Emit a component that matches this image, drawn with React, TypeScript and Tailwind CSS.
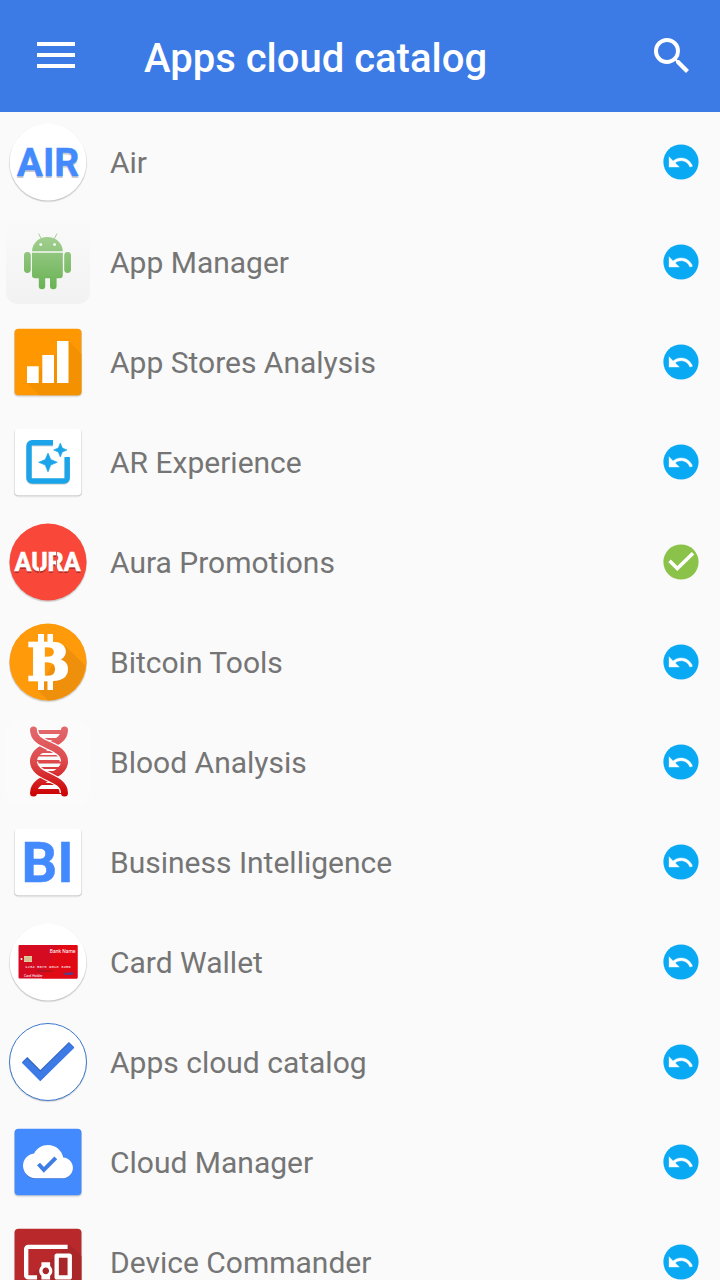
import React from 'react';
import { MdSearch } from 'react-icons/md';

type Item = {
  name: string;
  icon: React.ReactNode;
  installed?: boolean;
};

type Props = {
  children?: React.ReactNode;
};

const UNDO =
  'M12.5 8c-2.65 0-5.05.99-6.9 2.6L2 7v9h9l-3.62-3.62c1.39-1.16 3.16-1.88 5.12-1.88 3.54 0 6.55 2.31 7.6 5.5l2.37-.78C21.08 11.03 17.15 8 12.5 8z';
const CLOUD =
  'M19.35 10.04C18.67 6.59 15.64 4 12 4 9.11 4 6.6 5.64 5.35 8.04 2.34 8.36 0 10.91 0 14c0 3.31 2.69 6 6 6h13c2.76 0 5-2.24 5-5 0-2.64-2.05-4.78-4.65-4.96z';
const DEVICES =
  'M3 6h18V4H3c-1.1 0-2 .9-2 2v12c0 1.1.9 2 2 2h4v-2H3V6zm10 6H9v1.78c-.61.55-1 1.33-1 2.22s.39 1.67 1 2.22V20h4v-1.78c.61-.55 1-1.34 1-2.22s-.39-1.67-1-2.22V12zm-2 5.5c-.83 0-1.5-.67-1.5-1.5s.67-1.5 1.5-1.5 1.5.67 1.5 1.5-.67 1.5-1.5 1.5zM22 8h-6c-.5 0-1 .5-1 1v10c0 .5.5 1 1 1h6c.5 0 1-.5 1-1V9c0-.5-.5-1-1-1zm-1 10h-4v-8h4v8z';

function AppIcon({ children }: Props) {
  return (
    <svg viewBox="0 0 96 96" className="size-24 shrink-0" aria-hidden="true">
      {children}
    </svg>
  );
}

function Round({ fill, stroke, children }: Props & { fill: string; stroke?: string }) {
  return (
    <AppIcon>
      <circle cx="48" cy="49.2" r="39.3" fill="#000" opacity="0.07" />
      <circle cx="48" cy="48.8" r="38.8" fill="#000" opacity="0.12" />
      <circle cx="48" cy="48" r="38.5" fill={fill} stroke={stroke} />
      {children}
    </AppIcon>
  );
}

function Square({ fill, children }: Props & { fill: string }) {
  return (
    <AppIcon>
      <rect x="13.8" y="15" width="68.4" height="68.4" rx="4.5" fill="#000" opacity="0.06" />
      <rect x="14.2" y="15.3" width="67.6" height="67" rx="4" fill="#000" opacity="0.12" />
      <rect x="14.6" y="14.8" width="66.8" height="66.4" rx="4" fill={fill} />
      {children}
    </AppIcon>
  );
}

function AirIcon() {
  return (
    <Round fill="#fff">
      <g fontFamily="Roboto, sans-serif" fontWeight="700" fontSize="39" textAnchor="middle">
        <text x="48" y="63.5" fill="#000" opacity="0.2">AIR</text>
        <text x="48" y="62" fill="#448aff" stroke="#448aff" strokeWidth="0.4">AIR</text>
      </g>
    </Round>
  );
}

function AndroidIcon() {
  return (
    <AppIcon>
      <defs>
        <linearGradient id="tile" x1="0" y1="0" x2="0" y2="1">
          <stop offset="0" stopColor="#fafafa" />
          <stop offset="1" stopColor="#f2f2f2" />
        </linearGradient>
        <linearGradient id="robot" gradientUnits="userSpaceOnUse" x1="0" y1="20" x2="0" y2="75">
          <stop offset="0" stopColor="#a5d093" />
          <stop offset="1" stopColor="#69b254" />
        </linearGradient>
      </defs>
      <rect x="6" y="6" width="84" height="84" rx="12" fill="url(#tile)" />
      <g fill="url(#robot)">
        <path d="M32 37.3C32.3 29 39 23 47.4 23S62.5 29 62.8 37.3z" />
        <path d="M32 38.8h30.8v22.4a3 3 0 0 1-3 3H35a3 3 0 0 1-3-3z" />
        <rect x="24" y="38" width="6.8" height="21" rx="3.4" />
        <rect x="64.2" y="38" width="6.8" height="21" rx="3.4" />
        <path d="M38.8 60h6.4v12a3.2 3.2 0 0 1-6.4 0zM50 60h6.6v12a3.3 3.3 0 0 1-6.6 0z" />
      </g>
      <path d="M38.8 20l2.4 4.6M56.8 20l-2.4 4.6" stroke="#a5d093" strokeLinecap="round" />
      <circle cx="40.8" cy="30.6" r="1.4" fill="#fff" />
      <circle cx="54.6" cy="30.6" r="1.4" fill="#fff" />
    </AppIcon>
  );
}

function ChartIcon() {
  return (
    <Square fill="#ff9800">
      <path d="M68.5 27l12.9 13v37.2a4 4 0 0 1-4 4H39.3L27 69z" fill="#f39100" />
      <path d="M27 52.3h11.7V69H27zM42.3 41H54v28H42.3zM57 27h11.5v42H57z" fill="#fff" />
    </Square>
  );
}

function SparkleIcon() {
  const frame = 'M53 28.8H32a3 3 0 0 0-3 3V64a3 3 0 0 0 3 3h32.2a3 3 0 0 0 3-3V43';
  return (
    <Square fill="#fff">
      <path d={frame} transform="translate(0 1)" fill="none" stroke="#d9d9d9" strokeWidth="5.6" />
      <path d={frame} fill="none" stroke="#1ba4e9" strokeWidth="5.4" />
      <path
        d="M48 39l2.8 6.5 6.6 2.8-6.6 2.8L48 58l-2.8-6.9-6.6-2.8 6.6-2.8zM60.3 29l2 4.9 4.7 2.1-4.7 2.1-2 4.9-2-4.9-4.7-2.1 4.7-2.1z"
        fill="#1ba4e9"
        stroke="#1ba4e9"
        strokeWidth="0.6"
      />
    </Square>
  );
}

function AuraIcon() {
  return (
    <Round fill="#f9473a">
      <g fontFamily="Roboto, sans-serif" fontWeight="700" fontSize="25" textAnchor="middle">
        <text x="47.5" y="58.5" fill="#000" opacity="0.3">AURA</text>
        <text x="47.5" y="57" fill="#fff" stroke="#fff" strokeWidth="0.6">AURA</text>
      </g>
      <path d="M39.5 51v8M56.5 37v22" stroke="#f9473a" strokeWidth="0.9" />
    </Round>
  );
}

function BitcoinIcon() {
  return (
    <Round fill="#ff9b0b">
      <path d="M64 31l21.5 20.5A38.5 38.5 0 0 1 48 86.5L38 76z" fill="#ee900c" />
      <path d="M38 20h6v9h-6zM47.5 20h5.5v9h-5.5zM38 66h6v10h-6zM47.5 66h5.5v10h-5.5z" fill="#fff" />
      <text
        x="48.5"
        y="66"
        fontFamily="'DejaVu Serif', serif"
        fontWeight="700"
        fontSize="50"
        textAnchor="middle"
        fill="#fff"
        stroke="#fff"
        strokeWidth="2.4"
      >
        B
      </text>
    </Round>
  );
}

function DnaIcon() {
  const back = 'M64.5 16C64.5 33 33.5 30 33.5 47.5M64.5 47.5C64.5 64 33.5 62 33.5 79';
  const front = 'M33.5 16C33.5 33 64.5 30 64.5 47.5M33.5 47.5C33.5 64 64.5 62 64.5 79';
  return (
    <AppIcon>
      <defs>
        <linearGradient id="dna" gradientUnits="userSpaceOnUse" x1="0" y1="13" x2="0" y2="82">
          <stop offset="0" stopColor="#e2696d" />
          <stop offset="0.5" stopColor="#dd4a4d" />
          <stop offset="1" stopColor="#cc0000" />
        </linearGradient>
      </defs>
      <rect x="6" y="6" width="84" height="84" rx="12" fill="#fbfbfb" />
      <g fill="none" stroke="url(#dna)" strokeLinecap="round">
        <path
          d="M34 16h31v4H34zM39 24h21v2H39zM41 37h16v2H41zM36 41h26v1.5H36zM34 46h30v3.5H34zM36 53h26v2H36zM41 57h17v2H41zM39 69h21v2H39zM34 75h31v5H34z"
          fill="url(#dna)"
          stroke="none"
        />
        <path d={back} strokeWidth="7" />
        <path d={front} stroke="#fff" strokeWidth="9.5" strokeLinecap="butt" />
        <path d={front} strokeWidth="7" />
      </g>
    </AppIcon>
  );
}

function BiIcon() {
  return (
    <Square fill="#fff">
      <text
        x="47.5"
        y="68"
        fontFamily="Roboto, sans-serif"
        fontWeight="700"
        fontSize="56"
        textAnchor="middle"
        fill="#448aff"
        stroke="#448aff"
        strokeWidth="0.5"
      >
        BI
      </text>
    </Square>
  );
}

function CardIcon() {
  return (
    <Round fill="#fff">
      <rect x="18.5" y="31" width="59" height="33.6" rx="1" fill="#d50b22" />
      <path d="M58 31h18.5a1 1 0 0 1 1 1v31.6a1 1 0 0 1-1 1H42z" fill="#e00914" />
      <path d="M24 42h8v6h-8z" fill="#e3d3a4" />
      <path d="M24 44h3M24 46h3M29 44h3M29 46h3M28 42v6" stroke="#a88b5c" strokeWidth="0.5" />
      <circle cx="21.5" cy="45" r="1" fill="#fff" />
      <g fontFamily="Roboto, sans-serif" fill="#fff">
        <text x="75.5" y="39" fontSize="5" textAnchor="end">Bank Name</text>
        <text x="25" y="54" fontSize="4" fontFamily="'Liberation Mono', monospace">
          1234 5678 9018 3456
        </text>
        <text x="24" y="62.5" fontSize="3.5">Card Holder</text>
      </g>
      <path d="M37 57h16" stroke="#8b1a1a" />
      <path d="M63 58l3 1 7-1v3h-8z" fill="#5b3d86" />
    </Round>
  );
}

function CatalogIcon() {
  const check = 'M24.6 45.6l15.7 15.8L71.6 30.6';
  return (
    <Round fill="#fff" stroke="#3b78d0">
      <path d={check} fill="none" stroke="#2e62b8" strokeWidth="7.6" />
      <path d={check} transform="translate(0 1)" fill="none" stroke="#3d7ae6" strokeWidth="7" />
    </Round>
  );
}

function CloudIcon() {
  return (
    <Square fill="#448aff">
      <path d={CLOUD} transform="translate(23 23.5) scale(2.08)" fill="#2f62bd" opacity="0.7" />
      <path d={CLOUD} transform="translate(23 22.7) scale(2.08)" fill="#fff" />
      <path d="M38.5 50l5.3 5.8L55.8 43.8" fill="none" stroke="#3f7de6" strokeWidth="4" />
    </Square>
  );
}

function DevicesIcon() {
  return (
    <Square fill="#b9292c">
      <path d="M70 31l11.4 11v39.2H30L24 66z" fill="#a92729" />
      <path d={DEVICES} transform="translate(21.8 22) scale(2.18)" fill="#fff" />
    </Square>
  );
}

function StatusIcon({ installed }: { installed?: boolean }) {
  return (
    <svg viewBox="0 0 36 36" className="size-9" aria-hidden="true">
      <circle cx="18" cy="18" r="17.6" fill={installed ? '#8bc34a' : '#09a9f4'} />
      {installed ? (
        <path d="M6.5 16.8l7.8 7.7L30 9.2" fill="none" stroke="#fff" strokeWidth="3.6" />
      ) : (
        <path d={UNDO} transform="translate(3.7 4.7) scale(1.15)" fill="#fff" stroke="#fff" strokeWidth="0.3" />
      )}
    </svg>
  );
}

const items: Item[] = [
  { name: 'Air', icon: <AirIcon /> },
  { name: 'App Manager', icon: <AndroidIcon /> },
  { name: 'App Stores Analysis', icon: <ChartIcon /> },
  { name: 'AR Experience', icon: <SparkleIcon /> },
  { name: 'Aura Promotions', icon: <AuraIcon />, installed: true },
  { name: 'Bitcoin Tools', icon: <BitcoinIcon /> },
  { name: 'Blood Analysis', icon: <DnaIcon /> },
  { name: 'Business Intelligence', icon: <BiIcon /> },
  { name: 'Card Wallet', icon: <CardIcon /> },
  { name: 'Apps cloud catalog', icon: <CatalogIcon /> },
  { name: 'Cloud Manager', icon: <CloudIcon /> },
  { name: 'Device Commander', icon: <DevicesIcon /> },
];

export default function App() {
  return (
    <div className="flex h-screen flex-col bg-[#fafafa] font-[Roboto,sans-serif]">
      <header className="flex h-28 shrink-0 items-center bg-[#3c7ae6] pr-6 pl-9 text-white">
        <button type="button" aria-label="Open menu" className="flex size-10 items-center justify-center pb-0.5">
          <svg viewBox="0 0 38 26" className="w-[38px]" fill="currentColor" aria-hidden="true">
            <path d="M0 0h38v4H0zM0 11h38v4H0zM0 22h38v4H0z" />
          </svg>
        </button>
        <h1 className="ml-17 flex-1 truncate pt-1.5 text-[40px] leading-12 font-medium">
          Apps cloud catalog
        </h1>
        <button type="button" aria-label="Search">
          <MdSearch className="size-12" />
        </button>
      </header>
      <ul className="min-h-0 flex-1 overflow-y-auto [scrollbar-width:none]">
        {items.map((item) => (
          <li key={item.name} className="flex h-25 items-center pr-[21px]">
            {item.icon}
            <span className="ml-3.5 flex-1 truncate pt-0.5 text-[30px] leading-10 text-[#757575]">
              {item.name}
            </span>
            <button
              type="button"
              aria-label={item.installed ? `${item.name} is installed` : `Restore ${item.name}`}
            >
              <StatusIcon installed={item.installed} />
            </button>
          </li>
        ))}
      </ul>
    </div>
  );
}
